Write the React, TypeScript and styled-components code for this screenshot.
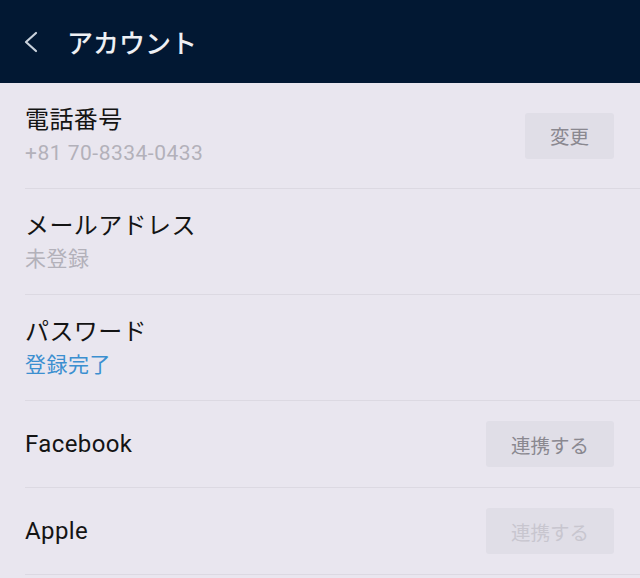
import React from 'react';
import styled, {createGlobalStyle} from 'styled-components';

const GlobalStyle = createGlobalStyle`
  html, body {
    margin: 0;
    padding: 0;
    background: #e9e6ef;
    font-family: Roboto, "Noto Sans CJK JP", sans-serif;
  }
`;

const Screen = styled.div`
  width: 640px;
  min-height: 578px;
  background: #e9e6ef;
  overflow: hidden;
`;

const Header = styled.header`
  height: 83px;
  background: #021833;
  display: flex;
  align-items: center;
  padding-left: 22px;
  gap: 27px;
`;

const BackIcon = styled.svg`
  width: 18px;
  height: 24px;
  flex: none;
`;

const Title = styled.h1`
  margin: 0;
  font-size: 26px;
  font-weight: 500;
  color: #eef0f4;
`;

const Row = styled.div`
  padding-left: 25px;
`;

const RowInner = styled.div<{$tall?: boolean}>`
  display: flex;
  align-items: center;
  justify-content: space-between;
  padding-right: 26px;
  height: ${(p) => (p.$tall ? '105px' : '86px')};
  border-bottom: 1px solid #dcd9e2;
`;

const Texts = styled.div`
  display: flex;
  flex-direction: column;
`;

const Label = styled.div`
  font-size: 24px;
  line-height: 32px;
  letter-spacing: 0.4px;
  color: #141414;
`;

const Sub = styled.div<{$accent?: boolean}>`
  font-size: 21px;
  line-height: 28px;
  letter-spacing: 0.5px;
  margin-top: 3px;
  color: ${(p) => (p.$accent ? '#3b8fd0' : '#b3b1ba')};
`;

const ActionButton = styled.button<{$disabled?: boolean}>`
  border: none;
  border-radius: 3px;
  background: #e0dee7;
  height: 46px;
  padding: 0 25px;
  font-family: inherit;
  font-size: 19.5px;
  color: ${(p) => (p.$disabled ? '#c8c6cf' : '#8a8890')};
  cursor: pointer;
`;

type Item = {
  label: string;
  sub?: string;
  accent?: boolean;
  action?: string;
  disabled?: boolean;
};

const items: Item[] = [
  {label: '電話番号', sub: '+81 70-8334-0433', action: '変更'},
  {label: 'メールアドレス', sub: '未登録'},
  {label: 'パスワード', sub: '登録完了', accent: true},
  {label: 'Facebook', action: '連携する'},
  {label: 'Apple', action: '連携する', disabled: true}
];

export default function App() {
  return (
    <Screen>
      <GlobalStyle />
      <Header>
        <BackIcon viewBox="0 0 18 24" fill="none">
          <path d="M14 3 L4 12 L14 21" stroke="#c9d1dc" strokeWidth="2.2" strokeLinecap="round" strokeLinejoin="round" />
        </BackIcon>
        <Title>アカウント</Title>
      </Header>
      {items.map((it) => (
        <Row key={it.label}>
          <RowInner $tall={!!it.sub}>
            <Texts>
              <Label>{it.label}</Label>
              {it.sub && <Sub $accent={it.accent}>{it.sub}</Sub>}
            </Texts>
            {it.action && <ActionButton $disabled={it.disabled}>{it.action}</ActionButton>}
          </RowInner>
        </Row>
      ))}
    </Screen>
  );
}
